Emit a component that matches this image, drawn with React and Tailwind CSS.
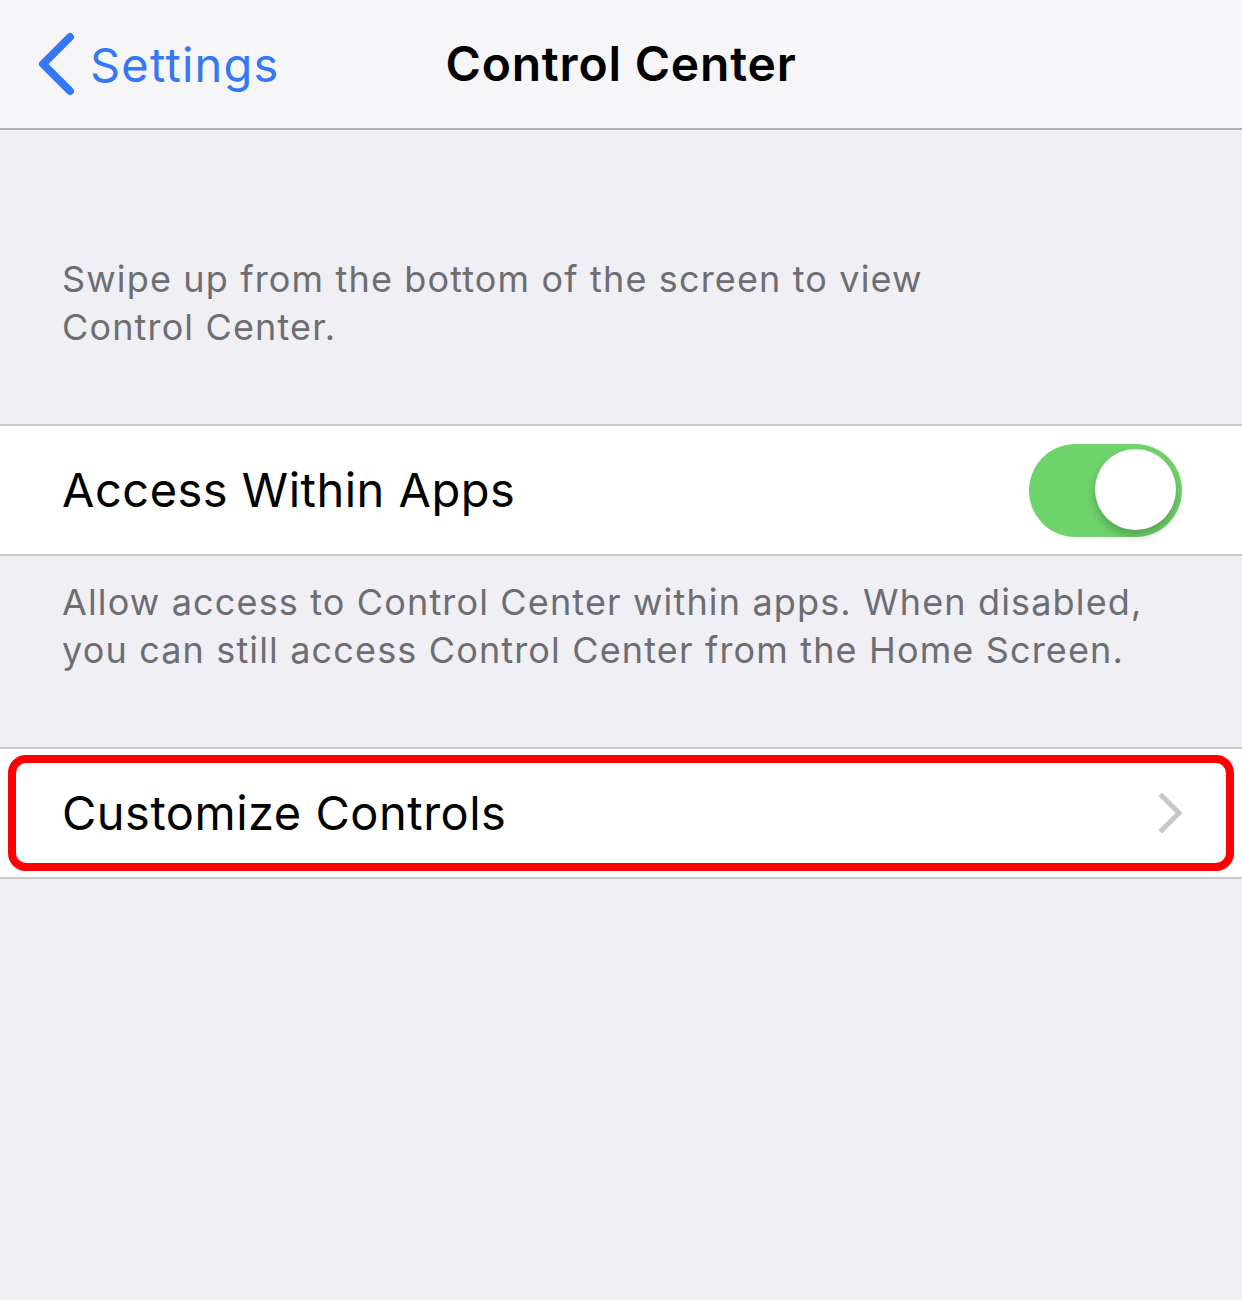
const font = { fontFamily: 'Inter, "Noto Sans", sans-serif' };

const Toggle = () => (
  <div className="relative w-[153px] h-[93px] rounded-full bg-[#6fd36c]">
    <div className="absolute right-[6px] top-[5px] w-[81px] h-[81px] rounded-full bg-white shadow-[0_6px_10px_rgba(0,0,0,0.22)]" />
  </div>
);

const Chevron = () => (
  <svg width="26" height="40" viewBox="0 0 26 40" fill="none">
    <path d="M4 3 L21 20 L4 37" stroke="#c7c7cc" strokeWidth="5" strokeLinecap="square" />
  </svg>
);

export default function App() {
  return (
    <div className="w-[1242px] h-[1300px] bg-[#efeff4] flex flex-col" style={font}>
      {/* Nav bar */}
      <div className="relative h-[130px] bg-[#f6f6f8] border-b-2 border-[#b2b2b6] flex items-center">
        <div className="flex items-center pl-[38px] text-[#3478f6]">
          <svg width="40" height="64" viewBox="0 0 40 64" fill="none">
            <path d="M32 5 L5 32 L32 59" stroke="#3478f6" strokeWidth="8" strokeLinecap="round" strokeLinejoin="round" />
          </svg>
          <span className="ml-[12px] text-[47px] tracking-[1.2px] leading-none">Settings</span>
        </div>
        <div className="absolute left-0 right-0 text-center text-[48px] font-semibold tracking-[0.8px] text-black leading-none pointer-events-none">
          Control Center
        </div>
      </div>

      {/* Footer 1 */}
      <div className="pt-[125px] pb-[73px] px-[62px] text-[36px] leading-[48px] tracking-[1.15px] text-[#6d6d72]">
        Swipe up from the bottom of the screen to view<br />Control Center.
      </div>

      {/* Access row */}
      <div className="h-[132px] bg-white border-y-2 border-[#c8c7cc] flex items-center justify-between pl-[62px] pr-[60px]">
        <span className="text-[47px] tracking-[0.5px] text-black">Access Within Apps</span>
        <Toggle />
      </div>

      {/* Footer 2 */}
      <div className="pt-[22px] pb-[73px] px-[62px] text-[36px] leading-[48px] tracking-[1.15px] text-[#6d6d72] whitespace-nowrap">
        Allow access to Control Center within apps. When disabled,<br />you can still access Control Center from the Home Screen.
      </div>

      {/* Customize row */}
      <div className="h-[132px] bg-white border-y-2 border-[#c8c7cc] flex items-center px-[8px]">
        <div className="flex-1 h-[116px] border-[8px] border-[#ff0000] rounded-[18px] flex items-center justify-between pl-[46px] pr-[42px]">
          <span className="text-[47px] tracking-[0.5px] text-black">Customize Controls</span>
          <Chevron />
        </div>
      </div>
    </div>
  );
}
